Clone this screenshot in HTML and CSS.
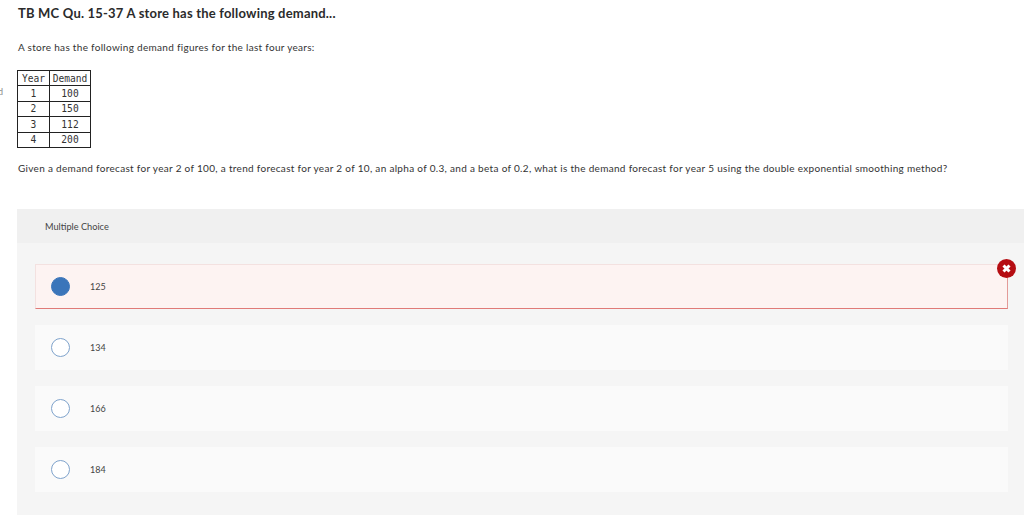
FILE: index.html
```html
<!DOCTYPE html>
<html lang="en">
<head>
    <meta charset="UTF-8">
    <title>TB MC Qu. 15-37</title>
    <link rel="stylesheet" href="styles.css">
</head>
<body>

<span class="strayMark">d</span>

<div class="question">
    <h1>TB MC Qu. 15-37 A store has the following demand...</h1>
    <p class="intro">A store has the following demand figures for the last four years:</p>

    <table class="demandTable">
        <tr><th>Year</th><th>Demand</th></tr>
        <tr><td>1</td><td>100</td></tr>
        <tr><td>2</td><td>150</td></tr>
        <tr><td>3</td><td>112</td></tr>
        <tr><td>4</td><td>200</td></tr>
    </table>

    <p class="prompt">Given a demand forecast for year 2 of 100, a trend forecast for year 2 of 10, an alpha of 0.3, and a beta of 0.2, what is the demand forecast for year 5 using the double exponential smoothing method?</p>
</div>

<div class="answers">
    <div class="answersHead">Multiple Choice</div>
    <div class="choices">
        <div class="choice wrong">
            <span class="radio checked"></span>
            <span>125</span>
            <span class="wrongBadge">
                <svg width="19" height="19" viewBox="0 0 19 19">
                    <circle cx="9.5" cy="9.5" r="9.5" fill="#b50d12"/>
                    <path d="M6.5 6.5l6 6M12.5 6.5l-6 6" stroke="#fff" stroke-width="3"/>
                </svg>
            </span>
        </div>
        <div class="choice">
            <span class="radio"></span>
            <span>134</span>
        </div>
        <div class="choice">
            <span class="radio"></span>
            <span>166</span>
        </div>
        <div class="choice">
            <span class="radio"></span>
            <span>184</span>
        </div>
    </div>
</div>

</body>
</html>
```

FILE: styles.css
```css
body {
    font-family: 'Lato', sans-serif;
    margin: 0;
    padding: 0;
    color: #333;
    background-color: #fff;
    height: 515px;
    overflow: hidden;
    position: relative;
}

.strayMark {
    position: absolute;
    left: -2px;
    top: 86px;
    font-size: 9px;
    color: #888;
}

.question {
    padding: 5px 0 0 18px;
    height: 204px;
}

.question h1 {
    margin: 0;
    font-size: 13px;
    line-height: 17px;
    font-weight: 700;
    letter-spacing: 0.2px;
    color: #2b2b2b;
}

.intro {
    margin: 18px 0 0;
    font-size: 10px;
    line-height: 14px;
    letter-spacing: 0.3px;
}

.demandTable {
    margin: 16px 0 0 -1px;
    border-collapse: collapse;
    font-family: 'DejaVu Sans Mono', monospace;
    font-size: 9.6px;
    color: #333;
}

.demandTable th, .demandTable td {
    border: 1px solid #222;
    height: 14.4px;
    padding: 0;
    font-weight: 400;
    text-align: center;
}

.demandTable th:first-child, .demandTable td:first-child {
    width: 31px;
}

.demandTable th:last-child, .demandTable td:last-child {
    width: 40px;
}

.prompt {
    margin: 13px 0 0;
    font-size: 10px;
    line-height: 14px;
    letter-spacing: 0.31px;
    white-space: nowrap;
}

.answers {
    margin-left: 17px;
    height: 306px;
    background-color: #f5f5f5;
}

.answersHead {
    height: 34px;
    padding-left: 28px;
    background-color: #f0f0f0;
    font-size: 9.2px;
    line-height: 36px;
    color: #444;
}

.choices {
    display: flex;
    flex-direction: column;
    gap: 16px;
    padding: 21px 16px 0 18px;
}

.choice {
    height: 45px;
    display: flex;
    align-items: center;
    gap: 20px;
    padding-left: 16px;
    background-color: #fafafa;
    font-size: 9px;
    color: #444;
    position: relative;
    box-sizing: border-box;
}

.choice.wrong {
    background-color: #fdf3f2;
    border: 1px solid #f3e1e0;
    border-bottom-color: #e07a78;
    border-right-color: #e39a98;
    padding-left: 15px;
}

.radio {
    width: 17px;
    height: 17px;
    border: 1px solid #7fa3cc;
    border-radius: 50%;
    background-color: #fff;
}

.radio.checked {
    background-color: #3b75ba;
    border-color: #3b75ba;
}

.wrongBadge {
    position: absolute;
    right: -9px;
    top: -6px;
    width: 19px;
    height: 19px;
}
```
